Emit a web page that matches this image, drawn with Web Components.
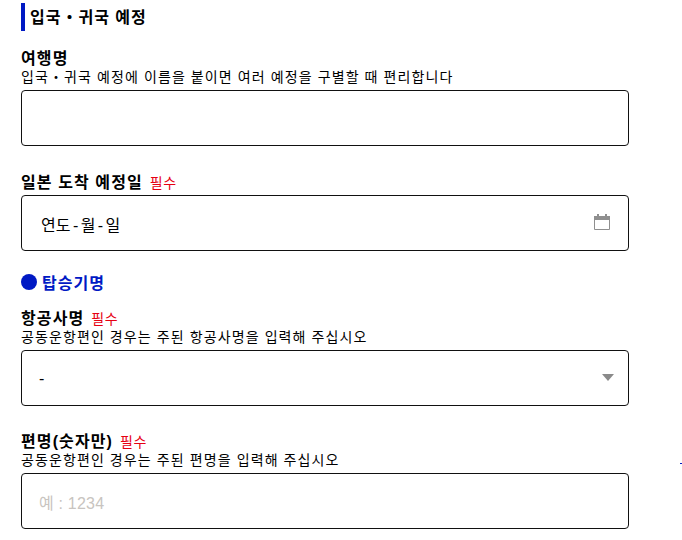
<!DOCTYPE html>
<html lang="ko">
<head>
<meta charset="utf-8">
<title>입국・귀국 예정</title>
<style>
html, body { margin: 0; padding: 0; background: #fff; }
body {
    width: 629px;
    height: 540px;
    overflow: hidden;
    padding: 3px 0 0 21px;
    box-sizing: border-box;
    font-family: "Liberation Sans", "Noto Sans CJK KR", sans-serif;
    color: #000;
}
#speck { position: absolute; left: 680px; top: 463px; width: 2px; height: 1px; background: #0019c4; }
</style>
</head>
<body>
<section-title>입국・귀국 예정</section-title>
<form-field label="여행명" hint="입국・귀국 예정에 이름을 붙이면 여러 예정을 구별할 때 편리합니다" style="margin-top:15px"></form-field>
<form-field label="일본 도착 예정일" required value="연도 - 월 - 일" icon="calendar" style="margin-top:24px"></form-field>
<sub-title style="margin-top:19px">탑승기명</sub-title>
<form-field label="항공사명" required hint="공동운항편인 경우는 주된 항공사명을 입력해 주십시오" value="-" icon="arrow" pad="17" style="margin-top:12px"></form-field>
<form-field label="편명(숫자만)" required hint="공동운항편인 경우는 주된 편명을 입력해 주십시오" placeholder="예 : 1234" pad="17" style="margin-top:23px"></form-field>
<div id="speck"></div>

<script>
class SectionTitle extends HTMLElement {
    constructor() {
        super();
        this.attachShadow({ mode: "open" });
        this.shadowRoot.innerHTML = `
      <style>
      :host {
        display: block;
        box-sizing: border-box;
        border-left: 4px solid #0019c4;
        height: 28px;
        line-height: 28px;
        padding: 1px 0 0 5px;
        font-size: 16px;
        font-weight: 700;
        letter-spacing: 1px;
      }
      </style>
      <slot></slot>`;
    }
}

class SubTitle extends HTMLElement {
    constructor() {
        super();
        this.attachShadow({ mode: "open" });
        this.shadowRoot.innerHTML = `
      <style>
      :host {
        display: flex;
        align-items: center;
        gap: 5px;
        height: 24px;
        font-size: 16px;
        font-weight: 700;
        letter-spacing: 1px;
        color: #0019c4;
      }
      .dot {
        width: 16px;
        height: 16px;
        border-radius: 50%;
        background: #0019c4;
      }
      </style>
      <span class="dot"></span><slot></slot>`;
    }
}

const ICONS = {
    calendar: `<svg width="16" height="18" viewBox="0 0 16 18" style="margin:-5px 6px 0 0">
        <path d="M0.5 3.5h15v13h-15z" fill="#fff" stroke="#8f8f8f"/>
        <path d="M0 3h3V1h2v2h6V1h2v2h3v4H0z" fill="#8f8f8f"/>
      </svg>`,
    arrow: `<svg width="12" height="7" viewBox="0 0 12 7" style="margin:-3px 2px 0 0"><path d="M0 0h12L6 7z" fill="#8a8a8a"/></svg>`
};

class FormField extends HTMLElement {
    constructor() {
        super();
        this.attachShadow({ mode: "open" });
    }

    connectedCallback() {
        const label = this.getAttribute("label") || "";
        const hint = this.getAttribute("hint");
        const value = this.getAttribute("value");
        const placeholder = this.getAttribute("placeholder");
        const icon = this.getAttribute("icon");
        const pad = this.getAttribute("pad") || "19";
        const required = this.hasAttribute("required");

        this.shadowRoot.innerHTML = `
      <style>
      :host { display: block; }
      .label {
        display: flex;
        align-items: baseline;
        gap: 7px;
        box-sizing: border-box;
        height: 22px;
        padding-top: 2px;
        line-height: 22px;
        font-size: 16px;
        font-weight: 700;
        letter-spacing: 1.1px;
      }
      .req {
        font-size: 14px;
        font-weight: 400;
        letter-spacing: .6px;
        color: #e60012;
      }
      .hint {
        box-sizing: border-box;
        height: 17px;
        padding-top: 1px;
        line-height: 17px;
        font-size: 14px;
        letter-spacing: 1.1px;
        margin-bottom: 5px;
      }
      .box {
        display: flex;
        align-items: center;
        justify-content: space-between;
        box-sizing: border-box;
        height: 56px;
        padding: 2px 12px 0 ${pad}px;
        border: 1px solid #111;
        border-radius: 4px;
        font-size: 16px;
        word-spacing: -2px;
      }
      .ph { color: #c8c4c0; word-spacing: 0; letter-spacing: .2px; }
      svg { display: block; }
      </style>
      <div class="label"><span>${label}</span>${required ? `<span class="req">필수</span>` : ""}</div>
      ${hint ? `<div class="hint">${hint}</div>` : `<div style="height:3px"></div>`}
      <div class="box">
        ${value ? `<span>${value}</span>` : ""}
        ${placeholder ? `<span class="ph">${placeholder}</span>` : ""}
        ${icon ? ICONS[icon] : ""}
      </div>`;
    }
}

customElements.define("section-title", SectionTitle);
customElements.define("sub-title", SubTitle);
customElements.define("form-field", FormField);
</script>
</body>
</html>
